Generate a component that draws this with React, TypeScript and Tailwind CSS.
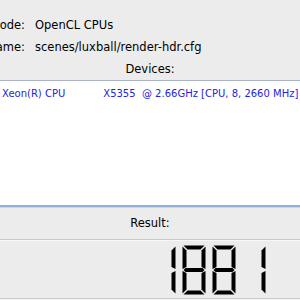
import React from "react";

const W = 24;
const H = 50;
const T = 4;

const segs: Record<string, string> = {
  a: `1.5,0.5 22.5,0.5 ${W - 1.5 - T},${T + 0.5} ${1.5 + T},${T + 0.5}`,
  d: `1.5,${H - 0.5} 22.5,${H - 0.5} ${W - 1.5 - T},${H - 0.5 - T} ${1.5 + T},${H - 0.5 - T}`,
  g: `1.5,25 ${1.5 + T / 2},${25 - T / 2} ${W - 1.5 - T / 2},${25 - T / 2} ${W - 1.5},25 ${W - 1.5 - T / 2},${25 + T / 2} ${1.5 + T / 2},${25 + T / 2}`,
  f: `0.5,1.5 ${0.5 + T},${1.5 + T} ${0.5 + T},${24 - T / 2} 0.5,24`,
  e: `0.5,26 ${0.5 + T},${26 + T / 2} ${0.5 + T},${H - 1.5 - T} 0.5,${H - 1.5}`,
  b: `${W - 0.5},1.5 ${W - 0.5 - T},${1.5 + T} ${W - 0.5 - T},${24 - T / 2} ${W - 0.5},24`,
  c: `${W - 0.5},26 ${W - 0.5 - T},${26 + T / 2} ${W - 0.5 - T},${H - 1.5 - T} ${W - 0.5},${H - 1.5}`,
};

const digitSegs: Record<string, string[]> = {
  "1": ["b", "c"],
  "8": ["a", "b", "c", "d", "e", "f", "g"],
};

function LCD({ value }: { value: string }) {
  return (
    <svg width={120} height={52} viewBox="0 0 120 52">
      {value.split("").map((ch, i) => (
        <g key={i} transform={`translate(${2 + i * 30},1)`}>
          {digitSegs[ch].map((s) => (
            <polygon key={s} points={segs[s]} fill="#000" />
          ))}
        </g>
      ))}
    </svg>
  );
}

export default function App() {
  return (
    <div
      className="w-[300px] h-[300px] bg-[#ececec] overflow-hidden flex flex-col text-[#000]"
      style={{ fontFamily: '"Lucida Grande", "DejaVu Sans", sans-serif' }}
    >
      <div className="h-[15px]" />
      <div className="h-[22px] flex items-center text-[11.5px] whitespace-nowrap">
        <div className="w-[25px] flex justify-end">Render Mode:</div>
        <div className="ml-[10px]">OpenCL CPUs</div>
      </div>
      <div className="h-[22px] flex items-center text-[11.5px] whitespace-nowrap">
        <div className="w-[25px] flex justify-end">Scene Name:</div>
        <div className="ml-[10px]">scenes/luxball/render-hdr.cfg</div>
      </div>
      <div className="h-[21px] flex items-center justify-center text-[11.5px]">Devices:</div>
      <div className="h-[127px] bg-white border-t border-t-[#a9b4c4] border-b-2 border-b-[#8fb1dc] flex flex-col">
        <div className="h-[24px] flex items-center text-[10px] text-[#2424e0] whitespace-nowrap pl-[2px]">
          <span>Xeon(R) CPU</span>
          <span className="ml-[38px]">X5355&nbsp;&nbsp;@ 2.66GHz [CPU, 8, 2660 MHz]</span>
        </div>
      </div>
      <div className="h-[1px] bg-[#c6d7ec]" />
      <div className="h-[31px] flex items-center justify-center text-[11.5px]">Result:</div>
      <div className="h-[1px] bg-[#c8c8c8]" />
      <div className="h-[1px] bg-[#f8f8f8]" />
      <div className="h-[57px] flex items-center justify-end pr-[30px]">
        <LCD value="1881" />
      </div>
      <div className="h-[1px] bg-[#c8c8c8]" />
      <div className="h-[1px] bg-[#f8f8f8]" />
    </div>
  );
}
